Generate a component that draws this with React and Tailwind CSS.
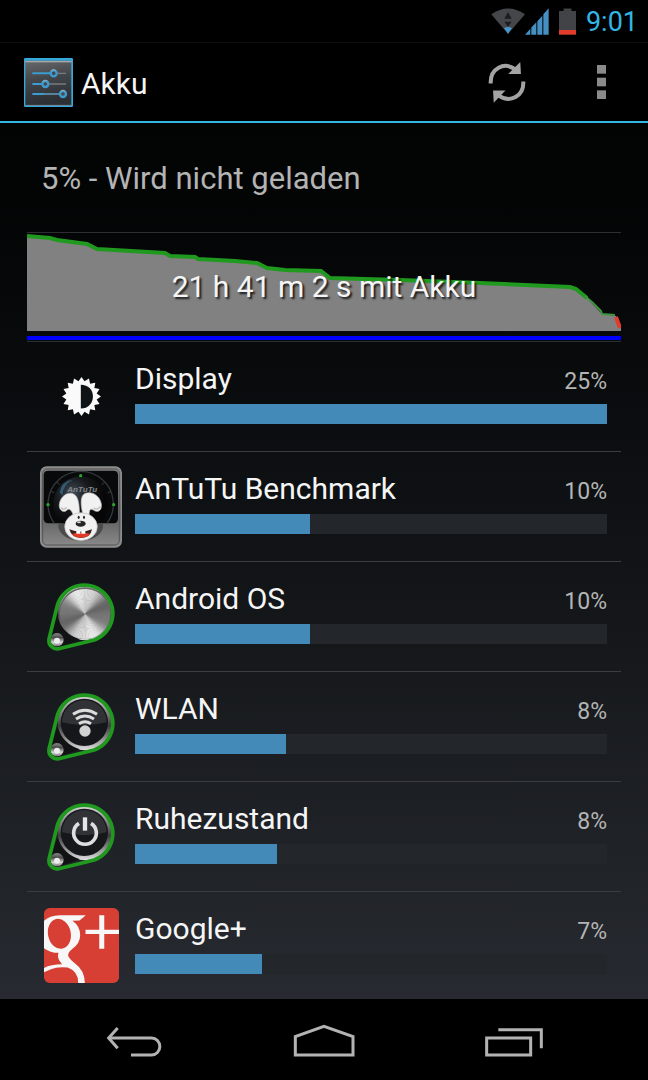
/**
 * App.jsx
 * Battery usage screen (Android 4 "Holo" settings)
 *
 * Shows the discharge history and the list of
 * apps and services that used the most battery.
 */

import { useId } from 'react'

const DISCHARGE_LINE =
  '0,3 23,5 30,7 60,11 70,16 138,20 143,23 168,24 171,26 208,28 230,30 240,35 258,37 294,38 303,45 373,47 453,50 543,54 549,56 560,65'

// Brushed metal is drawn as thin wedges, lighter towards top and bottom
const METAL_WEDGES = Array.from({ length: 90 }, (_, i) => {
  const start = (i * 4 * Math.PI) / 180
  const end = ((i * 4 + 5) * Math.PI) / 180
  const mid = i * 4 + 2
  const light = Math.round(168 + 66 * Math.cos((2 * (mid - 82) * Math.PI) / 180) + 12 * Math.cos((6 * mid * Math.PI) / 180))
  const point = (a) => `${165 + 75 * Math.cos(a)} ${130 + 75 * Math.sin(a)}`
  return {
    d: `M165 130L${point(start)}L${point(end)}Z`,
    fill: `rgb(${light},${light},${light})`
  }
})

function SettingsIcon() {
  const id = useId()
  return (
    <svg className="w-[49px] h-[49px]" viewBox="0 0 147 147" aria-hidden="true">
      <defs>
        <linearGradient id={id} x1="0" y1="0" x2="0.2" y2="1">
          <stop offset="0" stopColor="#68696b" />
          <stop offset="0.5" stopColor="#414448" />
          <stop offset="1" stopColor="#2c2f34" />
        </linearGradient>
      </defs>
      <rect width="147" height="147" rx="4" fill="#36a9dc" />
      <rect x="4" y="8" width="138" height="134" fill={`url(#${id})`} />
      <rect x="4" y="9" width="139" height="4" fill="#a9a9a9" />
      <path d="M5 142H142" stroke="#8f9396" strokeWidth="2" />
      <path d="M98 46H126M74 78H126M60 108H106" stroke="#777b7e" strokeWidth="4" />
      <path d="M25 46H78M25 78H53M25 108H60" stroke="#3a9cd0" strokeWidth="6" />
      <path d="M60 108H106" stroke="#5687a5" strokeWidth="5" />
      <g fill="#45494d" stroke="#3e9bd0" strokeWidth="7">
        <circle cx="89" cy="46" r="9" />
        <circle cx="64" cy="78" r="9" />
        <circle cx="117" cy="108" r="9" />
      </g>
      <path d="M81 39a10 10 0 0 1 14 -2M56 71a10 10 0 0 1 14 -2M110 100a10 10 0 0 1 14 0" fill="none" stroke="#a3acb2" strokeWidth="3" />
    </svg>
  )
}

function WifiStatusIcon() {
  return (
    <svg className="w-[34px] h-[26px]" viewBox="64 24 102 78" aria-hidden="true">
      <path d="M65 43Q115 8 166 43L115 102Z" fill="#45464a" />
      <path d="M103 84Q115 78 127 84L115 101Z" fill="#4796cb" />
      <path d="M115 36L126 56H104ZM115 80L104 65H126Z" fill="#1b1d20" />
    </svg>
  )
}

function SignalStatusIcon() {
  return (
    <svg className="w-[24px] h-[27px]" viewBox="160 22 72 80" aria-hidden="true">
      <path d="M160 102L176 84V102ZM179 102V80L194 64V102ZM197 102V61L212 45V102ZM215 102V40L231 22V102Z" fill="#468fc2" />
    </svg>
  )
}

function BatteryStatusIcon() {
  return (
    <svg className="w-[17px] h-[27px]" viewBox="260 22 52 80" aria-hidden="true">
      <path d="M260 30H274V22H298V30H312V102H260Z" fill="#424347" />
      <path d="M260 88H312V102H260Z" fill="#e33b2c" />
    </svg>
  )
}

function RefreshIcon() {
  return (
    <svg className="w-[38px] h-[41px]" viewBox="53 188 113 122" aria-hidden="true">
      <g fill="none" stroke="#a3a3a3" strokeWidth="12">
        <path d="M61 252C59 207 101 185 136 211" />
        <path d="M158 246C160 290 119 312 84 287" />
      </g>
      <path d="M149 188L151 224H113Z" fill="#a3a3a3" />
      <path d="M70 309L68 273H105Z" fill="#a3a3a3" />
    </svg>
  )
}

function OverflowIcon() {
  return (
    <svg className="w-[9px] h-[34px]" viewBox="0 0 27 102" fill="#8a8a8a" aria-hidden="true">
      <rect width="27" height="26" />
      <rect y="38" width="27" height="26" />
      <rect y="76" width="27" height="26" />
    </svg>
  )
}

function DisplayIcon() {
  const points = Array.from({ length: 32 }, (_, i) => {
    const angle = (i * Math.PI) / 16
    const radius = i % 2 === 0 ? 58 : 46
    return `${58 + radius * Math.sin(angle)},${58 - radius * Math.cos(angle)}`
  }).join(' ')
  return (
    <svg className="w-[39px] h-[39px]" viewBox="0 0 116 116" aria-hidden="true">
      <polygon points={points} fill="#fafafa" />
      <path d="M56 23C78 23 92 38 92 58S78 94 56 94Z" fill="#101316" />
    </svg>
  )
}

function AntutuIcon() {
  const id = useId()
  return (
    <svg className="w-[82px] h-[82px]" viewBox="29 29 246 246" aria-hidden="true">
      <defs>
        <linearGradient id={`${id}f`} x1="0" y1="0" x2="0" y2="1">
          <stop offset="0" stopColor="#858585" />
          <stop offset="0.65" stopColor="#636363" />
          <stop offset="1" stopColor="#8b8b8b" />
        </linearGradient>
        <radialGradient id={`${id}d`} cx="0.35" cy="0.3" r="0.6">
          <stop offset="0" stopColor="#3f4b55" />
          <stop offset="0.5" stopColor="#17191c" />
          <stop offset="1" stopColor="#060607" />
        </radialGradient>
      </defs>
      <rect x="31" y="32" width="242" height="240" rx="18" fill={`url(#${id}f)`} stroke="#8e8e8e" strokeWidth="4" />
      <rect x="37" y="38" width="230" height="228" rx="14" fill="none" stroke="#555" strokeWidth="3" />
      <path d="M54 43H250Q263 43 263 56V186Q263 201 250 201H54Q40 201 40 186V56Q40 43 54 43Z" fill="#08090a" />
      <circle cx="151" cy="142" r="82" fill={`url(#${id}d)`} />
      <path d="M72 201A98 98 0 1 1 230 201" fill="none" stroke="#34383b" strokeWidth="4" />
      <path d="M62 105l10 4M80 78l8 7M214 86l8 -8M232 110l10 -5" stroke="#555" strokeWidth="2" />
      <path d="M88 108Q94 74 128 70Q98 84 96 118Z" fill="#335b74" />
      <text x="111" y="108" fontFamily="Liberation Sans, sans-serif" fontSize="24" fontWeight="bold" fontStyle="italic" fill="#85888b">
        AnTuTu
      </text>
      <g fill="#2ba32b">
        <circle cx="151" cy="58" r="5" />
        <circle cx="53" cy="145" r="5" />
        <circle cx="250" cy="145" r="5" />
      </g>
      <path d="M84 201H218V214Q207 250 151 254Q96 250 84 214Z" fill="#4b4b4b" />
      <g fill="#f1f1f1" stroke="#b8b8b8" strokeWidth="2">
        <path d="M130 184C126 160 116 156 110 161C101 172 84 162 87 143C91 119 111 106 128 112C147 120 148 153 147 184Z" />
        <path d="M160 184C152 155 146 119 165 111C184 103 210 119 213 143C216 165 200 170 189 161C179 155 175 162 177 186Z" />
        <ellipse cx="152" cy="211" rx="49" ry="42" />
      </g>
      <path d="M93 153Q98 165 109 153M190 155Q202 163 210 150" fill="none" stroke="#c6c6c6" strokeWidth="5" />
      <ellipse cx="145" cy="183" rx="3" ry="5" fill="#222" />
      <ellipse cx="161" cy="183" rx="3" ry="5" fill="#222" />
      <ellipse cx="151" cy="202" rx="15" ry="9" fill="#242424" />
      <ellipse cx="146" cy="198" rx="6" ry="3" fill="#d5d5d5" />
      <path d="M117 219Q151 232 185 219Q181 244 152 245Q123 244 117 219Z" fill="#3b2222" />
      <path d="M124 233Q152 225 180 233Q171 244 152 244Q134 244 124 233Z" fill="#e23a27" />
      <path d="M138 224H150V232H138ZM153 224H165V232H153Z" fill="#fff" />
    </svg>
  )
}

// Pulley shaped badge that the system entries share
function BeltIcon({ children }) {
  const id = useId()
  return (
    <svg className="w-[70px] h-[70px]" viewBox="48 34 210 210" aria-hidden="true">
      <defs>
        <linearGradient id={`${id}r`} x1="0" y1="0" x2="0" y2="1">
          <stop offset="0" stopColor="#d9d9d9" />
          <stop offset="0.3" stopColor="#858585" />
          <stop offset="0.55" stopColor="#3d3d3d" />
          <stop offset="0.75" stopColor="#808080" />
          <stop offset="1" stopColor="#e3e3e3" />
        </linearGradient>
        <linearGradient id={`${id}s`} x1="0" y1="0" x2="0" y2="1">
          <stop offset="0" stopColor="#8a8a8a" />
          <stop offset="0.35" stopColor="#4a4a4a" />
          <stop offset="0.7" stopColor="#d5d5d5" />
          <stop offset="1" stopColor="#777" />
        </linearGradient>
      </defs>
      <circle cx="165" cy="127" r="82" fill={`url(#${id}r)`} />
      <path d="M62 190L83 140Q98 190 150 206L92 226Z" fill="#111214" />
      <circle cx="81" cy="207" r="20" fill={`url(#${id}s)`} />
      <circle cx="81" cy="210" r="9" fill="#ededed" />
      {children}
      <path
        d="M57 205L81 108A85 85 0 1 1 193 208L86 234A25 25 0 0 1 57 205Z"
        fill="none"
        stroke="#20991f"
        strokeWidth="11"
        strokeLinejoin="round"
      />
    </svg>
  )
}

function DarkFace() {
  return (
    <>
      <circle cx="163" cy="125" r="71" fill="#15171a" />
      <path d="M96 125A67 67 0 0 1 230 125Q163 142 96 125Z" fill="#303236" />
    </>
  )
}

function AndroidOsIcon() {
  return (
    <BeltIcon>
      <circle cx="165" cy="128" r="78" fill="#666" />
      {METAL_WEDGES.map((wedge) => (
        <path key={wedge.d} d={wedge.d} fill={wedge.fill} />
      ))}
    </BeltIcon>
  )
}

function WlanIcon() {
  return (
    <BeltIcon>
      <DarkFace />
      <g fill="none" stroke="#dcdcdc" strokeWidth="9">
        <path d="M129 101Q165 77 201 101" />
        <path d="M138 115Q165 97 192 115" />
        <path d="M147 129Q165 117 183 129" />
      </g>
      <circle cx="165" cy="151" r="17" fill="#d2d2d2" />
    </BeltIcon>
  )
}

function StandbyIcon() {
  return (
    <BeltIcon>
      <DarkFace />
      <path d="M147 98A34 34 0 1 0 183 98" fill="none" stroke="#dedede" strokeWidth="11" />
      <path d="M165 80V120" stroke="#e6e6e6" strokeWidth="13" />
    </BeltIcon>
  )
}

function GooglePlusIcon() {
  const id = useId()
  return (
    <svg className="w-[75px] h-[75px]" viewBox="41 38 224 224" aria-hidden="true">
      <clipPath id={id}>
        <rect x="41" y="38" width="224" height="224" rx="17" />
      </clipPath>
      <g clipPath={`url(#${id})`}>
        <rect x="41" y="38" width="224" height="224" fill="#d73f34" />
        <path
          d="M41 76Q58 61 88 60L166 60L147 75L126 76Q149 92 149 119Q149 144 126 160Q113 170 113 180Q115 189 132 202Q163 224 163 262L143 262Q144 228 112 216Q82 212 62 221L41 230L41 217Q62 206 95 206Q79 190 84 172Q60 172 41 158Z"
          fill="#f7f7f7"
        />
        <ellipse cx="87" cy="115" rx="34" ry="45" transform="rotate(-12 87 115)" fill="#d73f34" />
        <path d="M165 103H265V116H165ZM206 60H221V160H206Z" fill="#f7f7f7" />
      </g>
    </svg>
  )
}

const USAGE = [
  { name: 'Display', percent: '25%', fill: 100, icon: DisplayIcon },
  { name: 'AnTuTu Benchmark', percent: '10%', fill: 37, icon: AntutuIcon },
  { name: 'Android OS', percent: '10%', fill: 37, icon: AndroidOsIcon },
  { name: 'WLAN', percent: '8%', fill: 32, icon: WlanIcon },
  { name: 'Ruhezustand', percent: '8%', fill: 30, icon: StandbyIcon },
  { name: 'Google+', percent: '7%', fill: 27, icon: GooglePlusIcon }
]

function StatusBar() {
  return (
    <div className="flex h-[43px] items-center justify-end gap-[10px] border-b border-[#0d0d0d] pr-[10px]">
      <div className="flex items-center">
        <WifiStatusIcon />
        <SignalStatusIcon />
      </div>
      <BatteryStatusIcon />
      <span className="pt-[2px] text-[27px] leading-9 text-[#33b5e5]">9:01</span>
    </div>
  )
}

function ActionBar() {
  return (
    <header className="flex h-20 items-center border-b-2 border-[#33b5e5] pl-6">
      <SettingsIcon />
      <h1 className="ml-2 flex-1 pt-1 text-[30px] leading-9">Akku</h1>
      <button type="button" aria-label="Aktualisieren" className="flex h-full w-[94px] items-center justify-center">
        <RefreshIcon />
      </button>
      <button type="button" aria-label="Weitere Optionen" className="flex h-full w-[94px] items-center justify-center">
        <OverflowIcon />
      </button>
    </header>
  )
}

function HistoryChart() {
  return (
    <div className="relative border-y border-[#2c2e31]">
      <svg className="block h-[108px] w-full" viewBox="0 0 594 108" preserveAspectRatio="none" aria-hidden="true">
        <polygon points={`${DISCHARGE_LINE} 575,81 589,83 594,92 594,98 0,98`} fill="#818181" />
        <polyline points={DISCHARGE_LINE} fill="none" stroke="#20991f" strokeWidth="4" />
        <polyline points="558,63 566,70 574,78 575,81 588,82" fill="none" stroke="#3f963f" strokeWidth="2" />
        <polyline points="589,84 593,95" fill="none" stroke="#e33b2c" strokeWidth="4" />
        <rect y="103" width="594" height="4" fill="#0000ff" />
      </svg>
      <p className="absolute inset-0 flex items-center justify-center text-[30px] leading-9 [text-shadow:2px_2px_2px_#000c]">
        21 h 41 m 2 s mit Akku
      </p>
    </div>
  )
}

function UsageRow({ item }) {
  const Icon = item.icon

  return (
    <li className="group flex border-b border-[#3a3d41] last:border-b-0">
      <div className="flex w-[108px] shrink-0 items-center justify-center">
        <Icon />
      </div>
      <div className="min-w-0 flex-1 pt-[19px] pr-[14px] pb-[27px] group-last:pb-6">
        <div className="flex items-baseline justify-between">
          <span className="truncate text-[30px] leading-9">{item.name}</span>
          <span className="text-[23px] leading-7 text-[#b4b4b4]">{item.percent}</span>
        </div>
        <div
          role="progressbar"
          aria-label={item.name}
          aria-valuenow={item.fill}
          className="mt-[7px] h-5 bg-[#23262b]"
        >
          <div className="h-full bg-[#448ab8]" style={{ width: `${item.fill}%` }} />
        </div>
      </div>
    </li>
  )
}

function NavigationBar() {
  return (
    <nav className="grid h-[81px] shrink-0 grid-cols-3 bg-black px-[39px] pt-[2px]">
      <button type="button" aria-label="Zurück" className="flex items-center justify-center">
        <svg className="w-[56px] h-[34px]" viewBox="81 101 168 102" fill="none" stroke="#b3b3b3" strokeWidth="9" aria-hidden="true">
          <path d="M90 143H218A24 25 0 0 1 218 194H156" />
          <path d="M116 113L89 143L116 174" />
        </svg>
      </button>
      <button type="button" aria-label="Startseite" className="flex items-center justify-center">
        <svg className="w-[62px] h-[34px]" viewBox="639 101 186 102" fill="none" stroke="#b3b3b3" strokeWidth="9" aria-hidden="true">
          <path d="M646 194V139L732 108L819 139V194Z" />
        </svg>
      </button>
      <button type="button" aria-label="Letzte Apps" className="flex items-center justify-center">
        <svg className="w-[58px] h-[34px]" viewBox="1217 101 174 102" fill="none" stroke="#b3b3b3" strokeWidth="9" aria-hidden="true">
          <path d="M1222 143H1354V194H1222Z" />
          <path d="M1257 118H1386V174" />
        </svg>
      </button>
    </nav>
  )
}

export default function App() {
  return (
    <div className="flex min-h-screen flex-col bg-black font-['Roboto',sans-serif] text-[#f5f5f5]">
      <StatusBar />
      <ActionBar />
      <main className="flex-1 bg-linear-to-b from-[#020303] to-[#272a30] px-[27px]">
        <p className="pt-[38px] pb-[35px] pl-[14px] text-[31px] leading-9 text-[#b4b4b4]">5% - Wird nicht geladen</p>
        <HistoryChart />
        <ul>
          {USAGE.map((item) => (
            <UsageRow key={item.name} item={item} />
          ))}
        </ul>
      </main>
      <NavigationBar />
    </div>
  )
}
